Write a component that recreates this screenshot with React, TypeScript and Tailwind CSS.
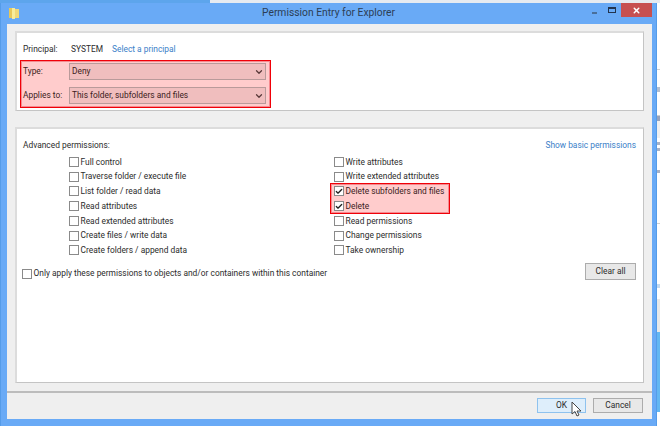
import { ChevronDown, X, Check } from "lucide-react";

const leftPerms = [
  "Full control",
  "Traverse folder / execute file",
  "List folder / read data",
  "Read attributes",
  "Read extended attributes",
  "Create files / write data",
  "Create folders / append data",
];

// colours of the window behind the dialog, seen in the strip on the right
const behind = [
  { h: 66, c: "bg-white" },
  { h: 1, c: "bg-[#d0d0d0]" },
  { h: 17, c: "bg-white" },
  { h: 5, c: "bg-[#b4bfd0]" },
  { h: 23, c: "bg-white" },
  { h: 1, c: "bg-[#d0d0d0]" },
  { h: 5, c: "bg-[#97a3bc]" },
  { h: 17, c: "bg-[#f0f0f0]" },
  { h: 4, c: "bg-white" },
  { h: 3, c: "bg-[#a8b2c6]" },
  { h: 3, c: "bg-white" },
  { h: 3, c: "bg-[#a8b2c6]" },
  { h: 19, c: "bg-white" },
  { h: 3, c: "bg-[#a8b2c6]" },
  { h: 50, c: "bg-white" },
  { h: 1, c: "bg-[#d0d0d0]" },
  { h: 60, c: "bg-white" },
  { h: 4, c: "bg-[#c4daf0]" },
  { h: 11, c: "bg-white" },
  { h: 33, c: "bg-[#e8e8e8]" },
  { h: 80, c: "bg-[#63b7f2]" },
];

function Box({ checked }: { checked?: boolean }) {
  return (
    <span className="w-[10px] h-[10px] shrink-0 border border-[#8a8a8a] bg-white flex items-center justify-center">
      {checked && <Check size={9} strokeWidth={4} className="text-[#222]" />}
    </span>
  );
}

function Perm({ label, checked }: { label: string; checked?: boolean }) {
  return (
    <div className="h-[14.75px] shrink-0 flex items-center gap-[1.5px]">
      <Box checked={checked} />
      <span className="whitespace-nowrap">{label}</span>
    </div>
  );
}

function Dropdown({ value }: { value: string }) {
  return (
    <div className="w-[197px] h-[17px] border border-[#b99a9a] bg-[#f0bebe] flex items-center justify-between pl-[2px] pr-[1px]">
      <span className="text-[#3c1c1c]">{value}</span>
      <ChevronDown size={10} strokeWidth={3} className="text-[#5a3a3a]" />
    </div>
  );
}

export default function App() {
  return (
    <div
      className="w-[660px] h-[426px] overflow-hidden flex flex-col text-[8.4px] text-[#2c2c2c]"
      style={{ fontFamily: 'Roboto, "Noto Sans", sans-serif' }}
    >
      <div className="h-[3px] flex shrink-0">
        <div className="w-[210px] bg-[#5da5ec]" />
        <div className="flex-1 bg-[#e6ebf1]" />
      </div>
      <div className="flex flex-1">
        <div className="w-[657px] h-[423px] bg-[#69aaf6] flex flex-col border-x border-[#559ce9]">
          {/* title bar */}
          <div className="h-[21px] shrink-0 grid grid-cols-[1fr_auto_1fr]">
            <div className="pl-[8px] pt-[4px]">
              <svg width="11" height="12" viewBox="0 0 11 12">
                <path d="M0 1h5l1 1h4v9H0z" fill="#e8c85a" />
                <path d="M3 1h3v11H3z" fill="#f8ec9a" />
                <path d="M6 2h4v9H6z" fill="#f0d878" />
              </svg>
            </div>
            <div className="text-[10.3px] leading-[14px] pt-[3px] text-[#2c3e55]">
              Permission Entry for Explorer
            </div>
            <div className="flex justify-end pr-[4px]">
              <div className="mt-[8.5px] w-[5px] h-[2px] bg-[#4a6f9a]" />
              <div className="ml-[11px] mt-[4px] w-[8px] h-[6px] border border-[#22344e] border-t-2" />
              <div className="ml-[5px] w-[31px] h-[14px] bg-[#c75050] flex items-center justify-center">
                <X size={9} strokeWidth={4} className="text-white" />
              </div>
            </div>
          </div>

          {/* client area */}
          <div className="ml-[6px] mr-[4px] h-[395px] bg-[#efefef] flex flex-col pt-[7px]">
            <div className="mx-[8px] h-[80px] shrink-0 bg-white border-t-2 border-l-2 border-[#dcdcdc] border-r border-b border-r-[#c4c4c4] border-b-[#c4c4c4] pt-[9px]">
              <div className="h-[14px] mb-[4px] flex items-center pl-[6px]">
                <span className="w-[48px]">Principal:</span>
                <span>SYSTEM</span>
                <span className="ml-[9px] text-[#3a80c8]">Select a principal</span>
              </div>
              <div className="ml-[3px] w-[251px] h-[48px] border border-[#f00008] shadow-[inset_0_0_0_1px_#f58a8f] bg-[#ffcccc] pt-[2px] pl-[2px] flex flex-col gap-[7px] text-[#3c1c1c]">
                <div className="flex items-center">
                  <span className="w-[46px]">Type:</span>
                  <Dropdown value="Deny" />
                </div>
                <div className="flex items-center">
                  <span className="w-[46px]">Applies to:</span>
                  <Dropdown value="This folder, subfolders and files" />
                </div>
              </div>
            </div>

            <div className="mx-[8px] mt-[16px] h-[256px] shrink-0 bg-white border-t-2 border-l-2 border-[#dcdcdc] border-r border-b border-r-[#c4c4c4] border-b-[#c4c4c4] pt-[9px]">
              <div className="h-[14px] flex items-center justify-between pl-[6px] pr-[7px]">
                <span>Advanced permissions:</span>
                <span className="text-[#3a80c8]">Show basic permissions</span>
              </div>
              <div className="grid grid-cols-[265px_1fr] pl-[52px] mt-[2.5px]">
                <div className="flex flex-col">
                  {leftPerms.map((p) => (
                    <Perm key={p} label={p} />
                  ))}
                </div>
                <div className="flex flex-col">
                  <Perm label="Write attributes" />
                  <Perm label="Write extended attributes" />
                  <div className="-ml-[4px] -my-[0.75px] w-[120px] h-[31px] shrink-0 border border-[#f00008] shadow-[inset_0_0_0_1px_#f58a8f] bg-[#ffcccc] pl-[3px] flex flex-col justify-center text-[#3c1c1c]">
                    <Perm label="Delete subfolders and files" checked />
                    <Perm label="Delete" checked />
                  </div>
                  <Perm label="Read permissions" />
                  <Perm label="Change permissions" />
                  <Perm label="Take ownership" />
                </div>
              </div>
              <div className="mt-[5px] flex items-start justify-between pl-[5px] pr-[7px]">
                <div className="mt-[4px] h-[14px] flex items-center gap-[1.5px]">
                  <Box />
                  <span>Only apply these permissions to objects and/or containers within this container</span>
                </div>
                <button className="w-[51px] h-[17px] border border-[#acacac] bg-[#e8e8e8] text-center">Clear all</button>
              </div>
            </div>

            <div className="mt-[8px] h-[2px] shrink-0 bg-[#bcbcbc]" />
            <div className="flex-1 pt-[5px] pr-[9px] flex justify-end gap-[7px] relative">
              <button className="w-[49px] h-[15px] border border-[#8ec2ee] bg-[#deeefb] text-center">OK</button>
              <button className="w-[50px] h-[15px] border border-[#acacac] bg-[#e8e8e8] text-center">Cancel</button>
              {/* mouse pointer */}
              <svg className="absolute left-[564px] top-[8px]" width="11" height="17" viewBox="0 0 11 17">
                <path
                  d="M1 1v12l3-2.5 2 4.5 2-1-2-4h4z"
                  fill="#fff"
                  stroke="#444"
                  strokeWidth="1"
                  strokeLinejoin="round"
                />
              </svg>
            </div>
          </div>
        </div>
        <div className="w-[3px] flex flex-col">
          {behind.map((s, i) => (
            <div key={i} className={`${s.c} shrink-0`} style={{ height: s.h }} />
          ))}
        </div>
      </div>
    </div>
  );
}
